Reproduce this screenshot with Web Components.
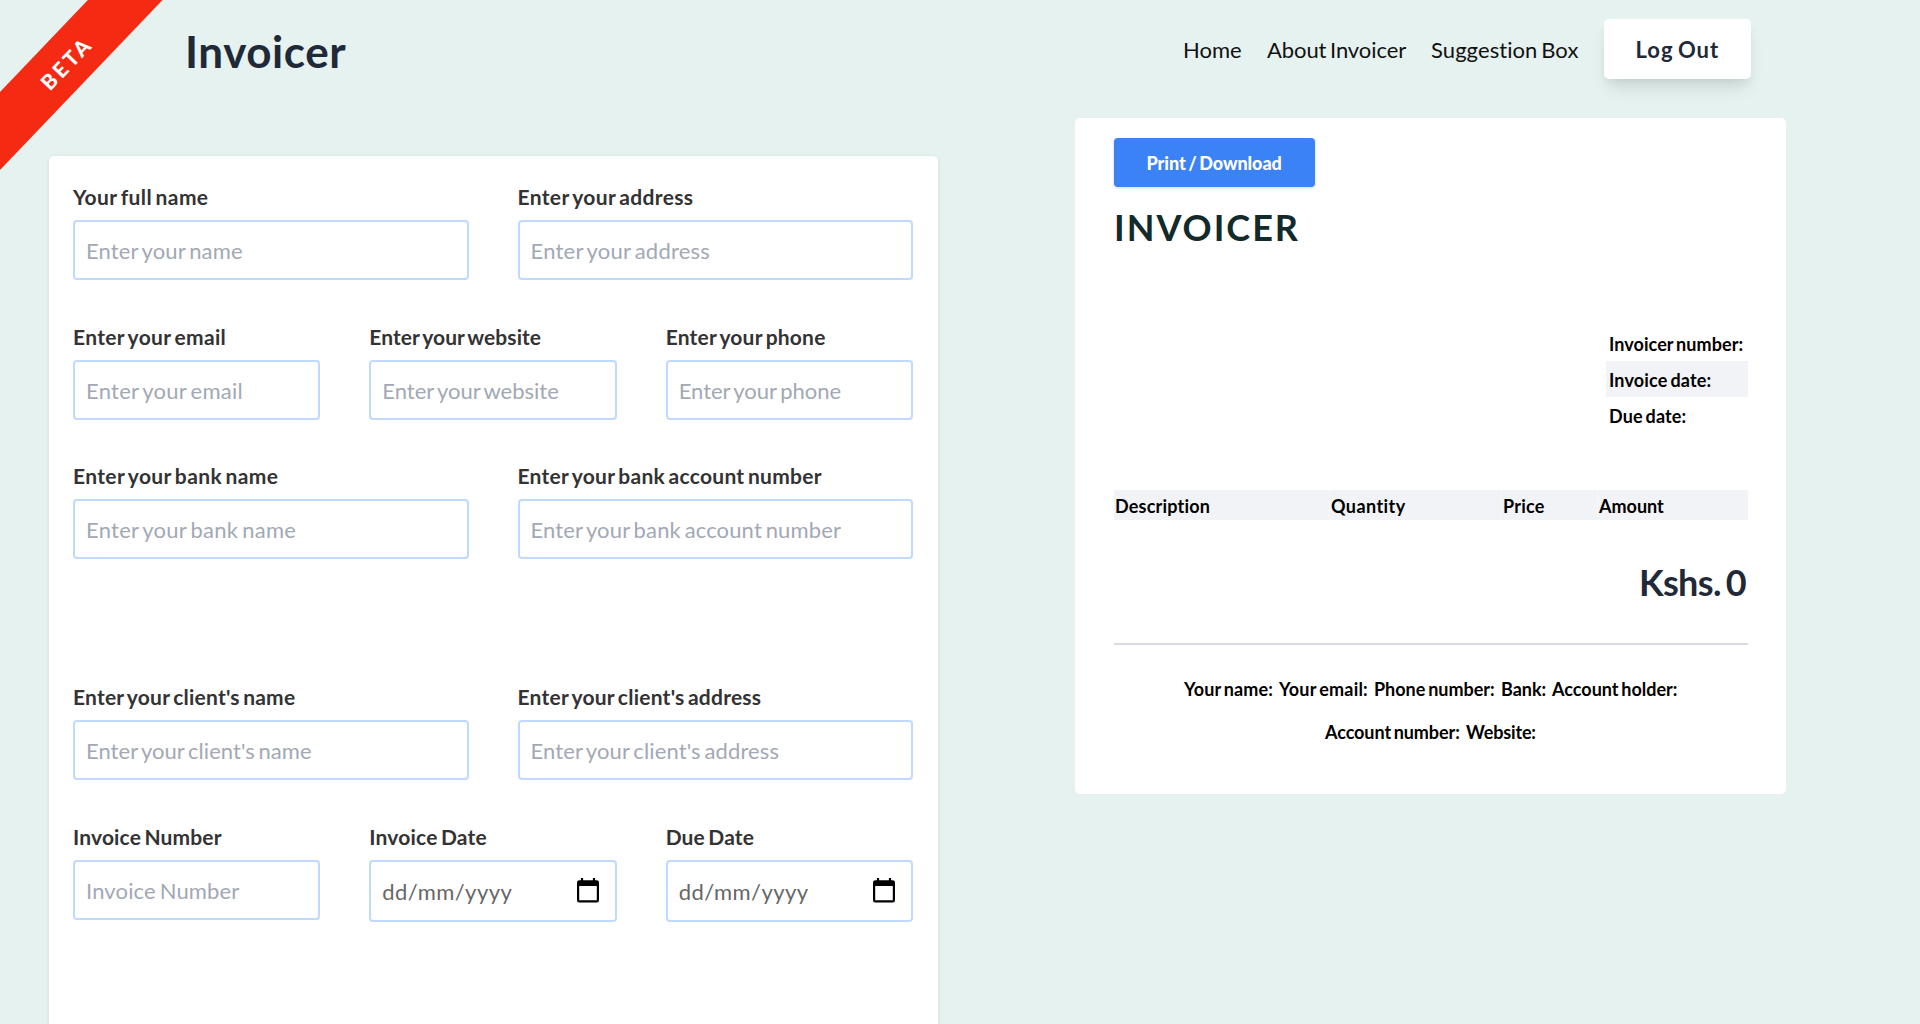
<!DOCTYPE html>
<html lang="en">
<head>
<meta charset="utf-8">
<title>Invoicer</title>
<style>
html,body{margin:0;height:100%;overflow:hidden;background:#e6f2f0;font-family:Lato,"Open Sans",sans-serif}
</style>
</head>
<body>
<invoicer-app></invoicer-app>
<script>
const define = (name, html, after) => customElements.define(name, class extends HTMLElement {
  connectedCallback() {
    if (this.shadowRoot) return;
    const t = document.createElement('template');
    t.innerHTML = typeof html === 'function' ? html(this) : html;
    this.attachShadow({ mode: 'open' }).append(t.content.cloneNode(true));
    if (after) after(this);
  }
});

/* Text tracked so that it fills the width given in its "w" attribute. */
define('fit-text', `<style>:host{display:inline-block;white-space:nowrap;word-spacing:-.09em;flex:none}span{display:inline-block;transform:translateY(1px)}</style><span><slot></slot></span>`, el => {
  const w = +el.getAttribute('w'), s = el.shadowRoot.querySelector('span');
  const n = el.textContent.length;
  el.style.width = w + 'px';
  s.style.letterSpacing = ((w - 1 - s.offsetWidth) / (n - 1)) + 'px';
});

define('beta-ribbon', `<style>
:host{position:absolute;left:0;top:0;width:170px;height:176px;overflow:hidden;pointer-events:none;z-index:2}
div{position:absolute;left:-85px;top:36px;width:300px;height:54px;line-height:54px;background:#f42a13;color:#fff;font-weight:900;font-size:21px;text-align:center;transform:rotate(-46.3deg)}
</style><div><fit-text w="62">BETA</fit-text></div>`);

define('nav-bar', `<style>
:host{display:flex;box-sizing:border-box;height:118px;padding:0 169px 20px 185px;align-items:center;justify-content:space-between}
.logo{font-size:44px;font-weight:700;color:#1f2937;line-height:60px;padding-top:2px}
nav{display:flex;align-items:center;gap:24px;font-size:22px;color:#111;line-height:30px}
button{all:unset;box-sizing:border-box;width:147px;height:60px;display:flex;align-items:center;justify-content:center;background:#fff;border-radius:5px;font-weight:700;color:#1f2937;box-shadow:0 12px 18px -4px #0000001c,0 5px 8px -2px #0000000d}
</style><fit-text class="logo" w="162">Invoicer</fit-text>
<nav><fit-text w="60">Home</fit-text><fit-text w="140">About Invoicer</fit-text><fit-text w="149">Suggestion Box</fit-text><button><fit-text w="84">Log Out</fit-text></button></nav>`);

define('form-field', el => `<style>
:host{display:block;flex:1;min-width:0}
.label{display:block;font-size:21px;font-weight:700;line-height:30px;color:#333;margin-bottom:9px}
.box{display:flex;align-items:center;justify-content:space-between;box-sizing:border-box;height:60px;border:2px solid #c0d9fe;border-radius:4px;background:#fff;padding:0 16px 0 11px;font-size:22px;line-height:30px;color:#a2a8b5}
.box.date{height:62px;color:#666}
svg{flex:none;display:block;margin-top:-1px}
</style><fit-text class="label" w="${el.getAttribute('lw')}">${el.getAttribute('label')}</fit-text>
<div class="box ${el.hasAttribute('date') ? 'date' : ''}"><fit-text w="${el.getAttribute('hw')}">${el.getAttribute('hint')}</fit-text>${el.hasAttribute('date') ? '<svg width="22" height="25" viewBox="0 0 22 25"><path d="M5 0v4M17 0v4" stroke="#000" stroke-width="2.2"/><path d="M0 4.5a2.3 2.3 0 0 1 2.3-2.3h17.4A2.3 2.3 0 0 1 22 4.500v17.700a2.300 2.300 0 0 1-2.300 2.300H2.300A2.300 2.300 0 0 1 0 22.200ZM2.200 8v14.300h17.600V8Z" fill="#000" fill-rule="evenodd"/></svg>' : ''}</div>`);

define('form-row', `<style>:host{display:flex;gap:49px;height:139.4px;align-items:flex-start}:host([last-of-group]){height:221.4px}</style><slot></slot>`);

define('invoice-form', `<style>
:host{display:block;box-sizing:border-box;width:889px;height:1000px;margin:38px 0 0 49px;padding:25.3px 25px 0 24px;background:#fff;border-radius:5px;box-shadow:0 1px 4px #00000018}
</style>
<form-row><form-field label="Your full name" lw="136" hint="Enter your name" hw="158"></form-field><form-field label="Enter your address" lw="177" hint="Enter your address" hw="180"></form-field></form-row>
<form-row><form-field label="Enter your email" lw="154" hint="Enter your email" hw="158"></form-field><form-field label="Enter your website" lw="173" hint="Enter your website" hw="177"></form-field><form-field label="Enter your phone" lw="161" hint="Enter your phone" hw="164"></form-field></form-row>
<form-row last-of-group><form-field label="Enter your bank name" lw="206" hint="Enter your bank name" hw="211"></form-field><form-field label="Enter your bank account number" lw="305" hint="Enter your bank account number" hw="311"></form-field></form-row>
<form-row><form-field label="Enter your client's name" lw="223" hint="Enter your client's name" hw="227"></form-field><form-field label="Enter your client's address" lw="245" hint="Enter your client's address" hw="249"></form-field></form-row>
<form-row><form-field label="Invoice Number" lw="150" hint="Invoice Number" hw="154"></form-field><form-field date label="Invoice Date" lw="118" hint="dd/mm/yyyy" hw="130"></form-field><form-field date label="Due Date" lw="89" hint="dd/mm/yyyy" hw="130"></form-field></form-row>`);

define('invoice-preview', `<style>
:host{display:block;box-sizing:border-box;width:711px;height:676px;padding:20px 38px 0 39px;background:#fff;border-radius:5px;color:#000;font-size:18px;font-weight:700}
button{all:unset;box-sizing:border-box;display:flex;align-items:center;justify-content:center;width:201px;height:49px;background:#3b82f6;color:#fff;border-radius:4px;font-size:18px;font-weight:900;line-height:24px;padding-bottom:1px;box-shadow:0 1px 3px #0000002e}
h1{margin:14px 0 0 0;font-size:36px;line-height:50px;color:#132a2a;height:50px}
.meta{width:142px;margin:74px 0 0 auto;line-height:36.2px}
.meta div{height:36.2px;padding-left:3px}
.meta .alt{background:#f2f3f6}
.items{display:flex;margin-top:56px;height:30px;line-height:30px;gap:1px;background:#f6f7f9}
.items div{background:#f2f3f6;flex:none;box-sizing:border-box;padding-left:1px}
.total{display:flex;justify-content:flex-end;margin-top:35px;line-height:52px;font-size:36px;color:#1f2937}
.rule{height:2px;background:#dadce3;margin-top:36px}
footer{margin-top:22px}
footer div{display:flex;justify-content:center;gap:5px;height:43.500px;line-height:43.500px}
</style>
<button><fit-text w="136">Print / Download</fit-text></button>
<h1><fit-text w="185">INVOICER</fit-text></h1>
<div class="meta"><div><fit-text w="135">Invoicer number:</fit-text></div><div class="alt"><fit-text w="103">Invoice date:</fit-text></div><div><fit-text w="78">Due date:</fit-text></div></div>
<div class="items"><div style="width:215px"><fit-text w="96">Description</fit-text></div><div style="width:171px"><fit-text w="76">Quantity</fit-text></div><div style="width:95px"><fit-text w="42">Price</fit-text></div><div style="width:150px"><fit-text w="66">Amount</fit-text></div></div>
<div class="total"><fit-text w="109">Kshs. 0</fit-text></div>
<div class="rule"></div>
<footer><div><fit-text w="90">Your name:</fit-text><fit-text w="90">Your email:</fit-text><fit-text w="122">Phone number:</fit-text><fit-text w="46">Bank:</fit-text><fit-text w="126">Account holder:</fit-text></div><div><fit-text w="136">Account number:</fit-text><fit-text w="71">Website:</fit-text></div></footer>`);

define('invoicer-app', `<style>
:host{display:block;position:relative;width:1920px;height:1024px;overflow:hidden;background:#e6f2f0}
main{display:flex;align-items:flex-start;gap:137px}
</style><beta-ribbon></beta-ribbon><nav-bar></nav-bar><main><invoice-form></invoice-form><invoice-preview></invoice-preview></main>`);
</script>
</body>
</html>
